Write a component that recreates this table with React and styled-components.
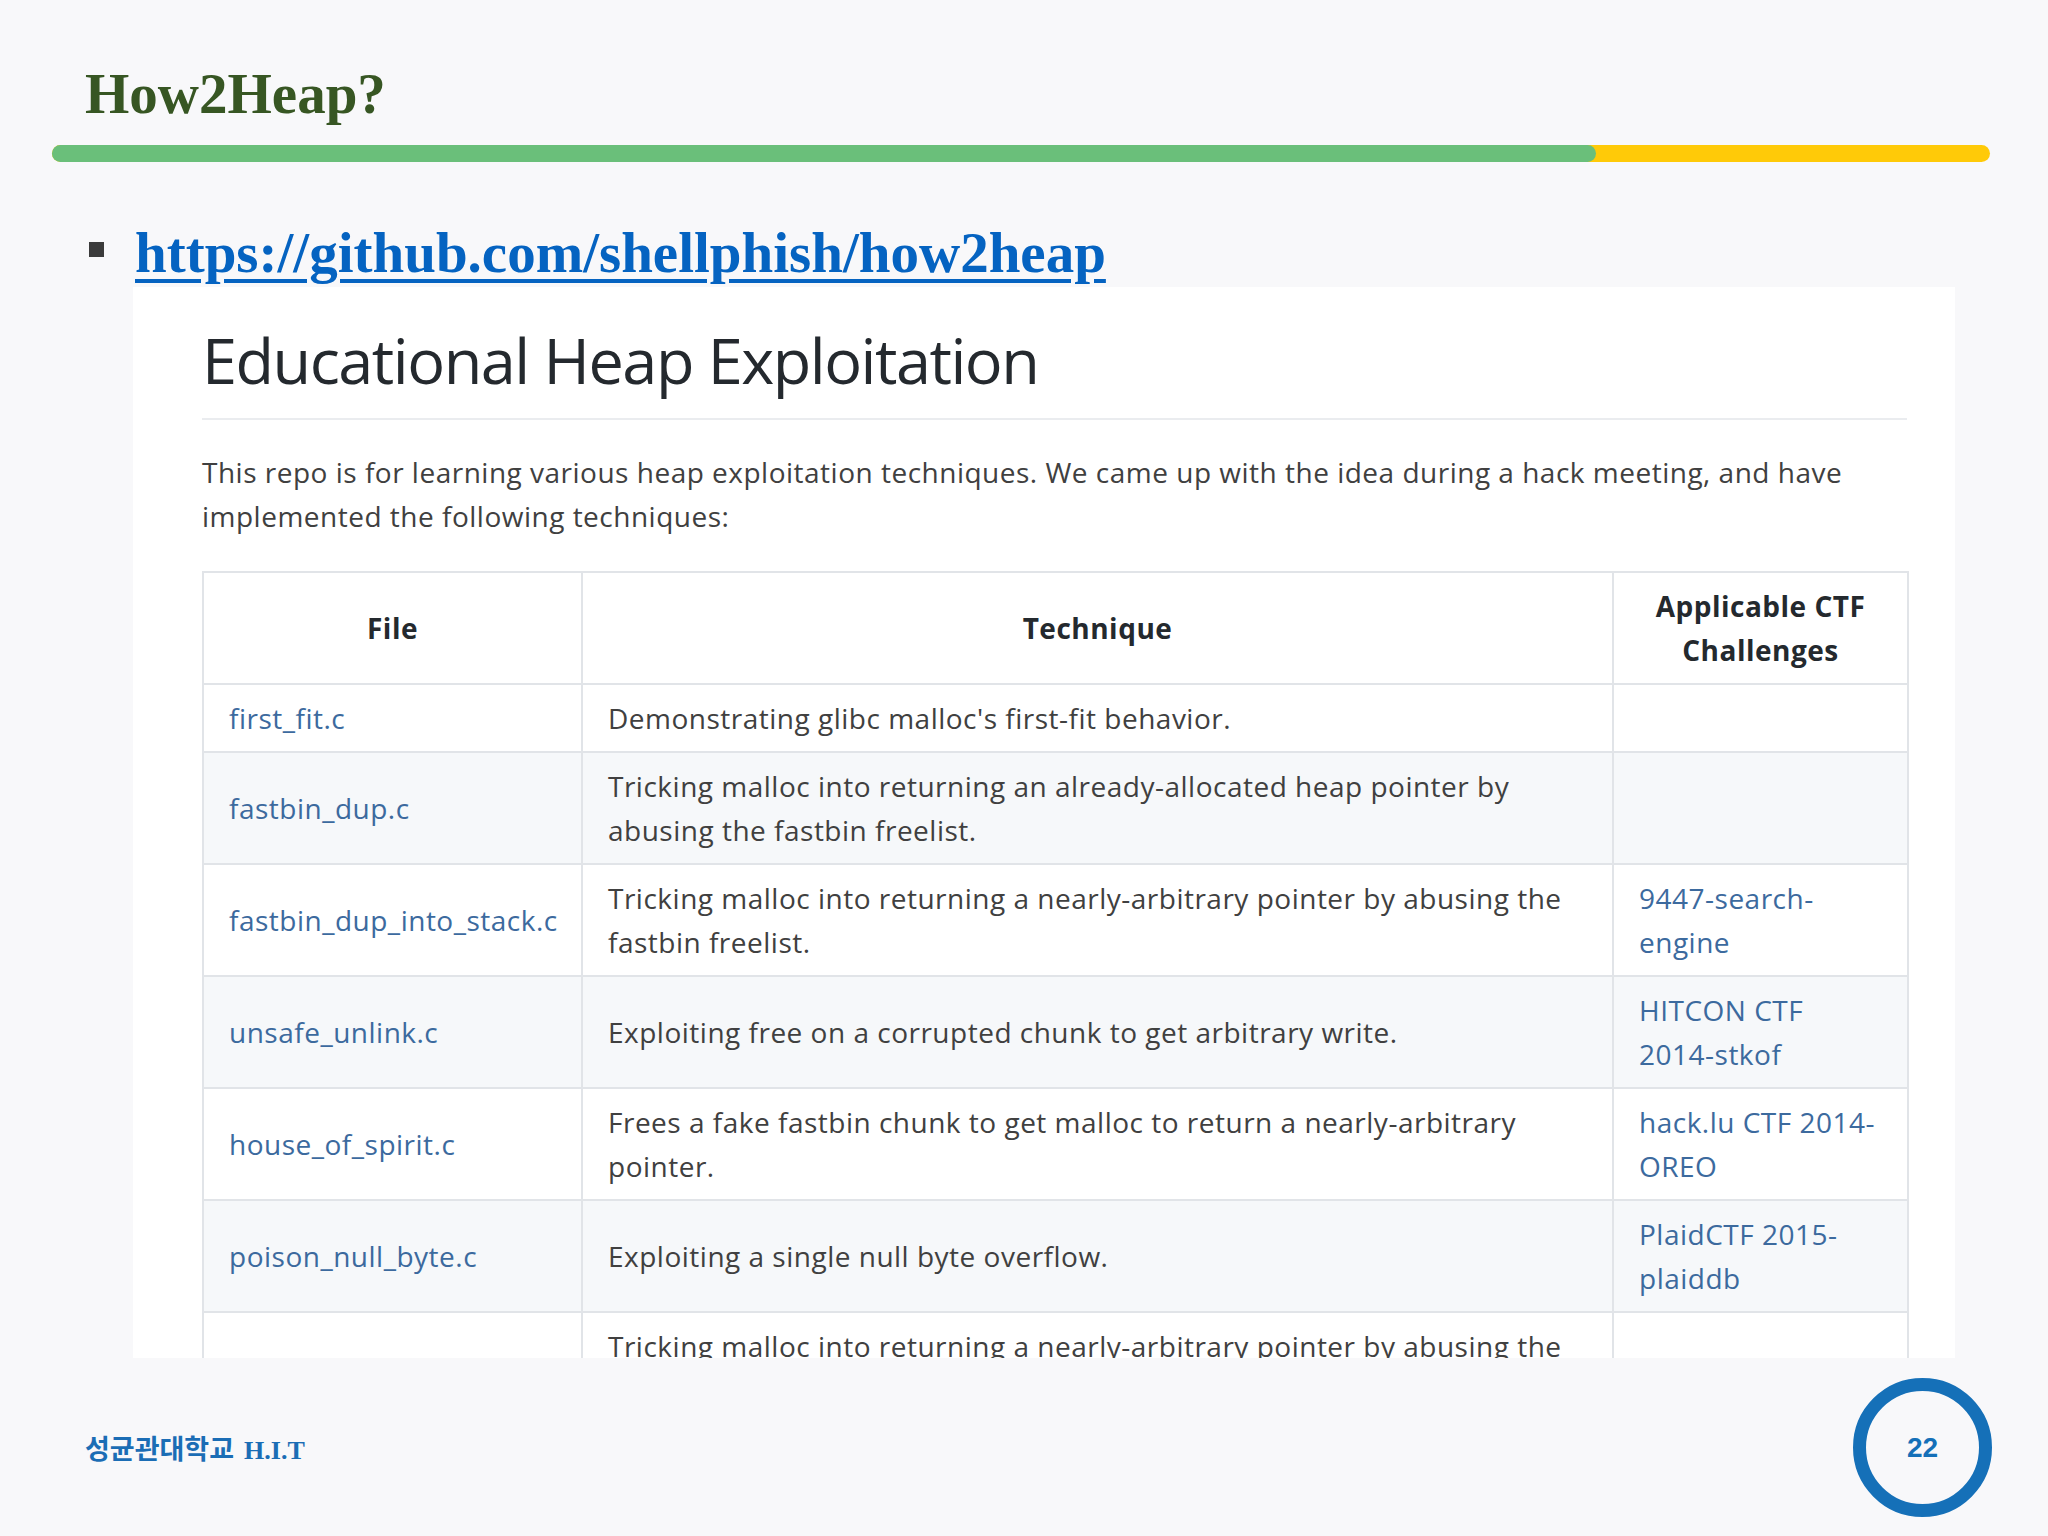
import React from 'react'
import styled, { createGlobalStyle } from 'styled-components'

const GlobalStyle = createGlobalStyle`
  html, body {
    margin: 0;
    padding: 0;
    background: #f8f8fa;
  }
  body {
    font-family: "Liberation Serif", serif;
  }
`

const rows = [
  { file: 'first_fit.c', tech: "Demonstrating glibc malloc's first-fit behavior.", ctf: '' },
  { file: 'fastbin_dup.c', tech: 'Tricking malloc into returning an already-allocated heap pointer by abusing the fastbin freelist.', ctf: '' },
  { file: 'fastbin_dup_into_stack.c', tech: 'Tricking malloc into returning a nearly-arbitrary pointer by abusing the fastbin freelist.', ctf: '9447-search-engine' },
  { file: 'unsafe_unlink.c', tech: 'Exploiting free on a corrupted chunk to get arbitrary write.', ctf: 'HITCON CTF 2014-stkof' },
  { file: 'house_of_spirit.c', tech: 'Frees a fake fastbin chunk to get malloc to return a nearly-arbitrary pointer.', ctf: 'hack.lu CTF 2014-OREO' },
  { file: 'poison_null_byte.c', tech: 'Exploiting a single null byte overflow.', ctf: 'PlaidCTF 2015-plaiddb' },
  { file: 'house_of_lore.c', tech: 'Tricking malloc into returning a nearly-arbitrary pointer by abusing the smallbin freelist.', ctf: '' },
]

const Slide = styled.div`
  width: 2048px;
  height: 1536px;
  box-sizing: border-box;
  display: flex;
  flex-direction: column;
  overflow: hidden;
  background: #f8f8fa;
`

const Title = styled.h1`
  margin: 65px 0 0 85px;
  font: bold 57px/57px "Liberation Serif", serif;
  color: #375623;
`

const Bar = styled.div`
  margin: 23px 0 0 52px;
  width: 1938px;
  height: 17px;
  border-radius: 9px;
  background: #ffca08;
  display: flex;
`

const BarFill = styled.div`
  width: ${p => p.$w}px;
  height: 100%;
  border-radius: 9px;
  background: #6abf7a;
`

const LinkRow = styled.div`
  display: flex;
  align-items: flex-start;
  gap: 31px;
  margin: 62px 0 0 89px;
`

const Bullet = styled.span`
  flex: none;
  width: 15px;
  height: 15px;
  margin-top: 18px;
  background: #3b3b3b;
`

const Link = styled.a`
  font: bold 57px/57px "Liberation Serif", serif;
  color: #0563c1;
  text-decoration: underline;
  text-decoration-thickness: 4px;
  text-underline-offset: 7px;
`

const Shot = styled.div`
  margin: 6px 0 0 133px;
  width: 1822px;
  height: 1071px;
  box-sizing: border-box;
  padding: 32px 48px 0 69px;
  overflow: hidden;
  background: #fff;
  font-family: "Open Sans", sans-serif;
  color: #24292e;
`

const Heading = styled.h2`
  margin: 0;
  padding-bottom: 16px;
  border-bottom: 2px solid #eaecef;
  font-size: 63px;
  line-height: 82.5px;
  font-weight: 400;
  letter-spacing: -1.5px;
`

const Para = styled.p`
  margin: 30px 0 32px;
  font-size: 28px;
  line-height: 44.5px;
  letter-spacing: 0.5px;
  color: #404040;
`

const Table = styled.table`
  width: 1705px;
  table-layout: fixed;
  border-collapse: collapse;
  font-size: 28px;
  line-height: 44px;
  letter-spacing: 0.5px;
`

const Cell = styled.td`
  padding: 11px 25px;
  border: 2px solid #e1e4e8;
  vertical-align: middle;
  color: #404040;
`

const HeadCell = styled.th`
  padding: 11px 25px;
  border: 2px solid #e1e4e8;
  font-weight: 700;
  text-align: center;
  color: #24292e;
`

const Row = styled.tr`
  background: ${p => (p.$striped ? '#f6f8fa' : '#fff')};
`

const FileLink = styled.a`
  color: #3c6a9e;
  text-decoration: none;
`

const Footer = styled.footer`
  margin-top: 20px;
  height: 139px;
  display: flex;
  align-items: center;
  justify-content: space-between;
  padding: 0 56px 0 85px;
`

const School = styled.div`
  display: flex;
  align-items: baseline;
  gap: 10px;
  color: #1b6db5;
`

const Korean = styled.span`
  font: bold 27px "Noto Sans CJK KR", sans-serif;
`

const Club = styled.span`
  font: bold 26px "Liberation Serif", serif;
`

const PageNo = styled.div`
  width: 139px;
  height: 139px;
  box-sizing: border-box;
  border: 13px solid #1570b8;
  border-radius: 50%;
  display: flex;
  align-items: center;
  justify-content: center;
  font: bold 28px "Liberation Sans", Arial, sans-serif;
  color: #1570b8;
`

export default function App() {
  return (
    <>
      <GlobalStyle />
      <Slide>
        <Title>How2Heap?</Title>
        <Bar>
          <BarFill $w={1544} />
        </Bar>
        <LinkRow>
          <Bullet />
          <Link href="#">https://github.com/shellphish/how2heap</Link>
        </LinkRow>
        <Shot>
          <Heading>Educational Heap Exploitation</Heading>
          <Para>
            This repo is for learning various heap exploitation techniques. We came up with the idea during a hack
            meeting, and have implemented the following techniques:
          </Para>
          <Table>
            <colgroup>
              <col style={{ width: 379 }} />
              <col style={{ width: 1031 }} />
              <col style={{ width: 295 }} />
            </colgroup>
            <thead>
              <tr>
                <HeadCell>File</HeadCell>
                <HeadCell>Technique</HeadCell>
                <HeadCell>Applicable CTF Challenges</HeadCell>
              </tr>
            </thead>
            <tbody>
              {rows.map((r, i) => (
                <Row key={r.file} $striped={i % 2 === 1}>
                  <Cell><FileLink href="#">{r.file}</FileLink></Cell>
                  <Cell>{r.tech}</Cell>
                  <Cell>{r.ctf && <FileLink href="#">{r.ctf}</FileLink>}</Cell>
                </Row>
              ))}
            </tbody>
          </Table>
        </Shot>
        <Footer>
          <School>
            <Korean>성균관대학교</Korean>
            <Club>H.I.T</Club>
          </School>
          <PageNo>22</PageNo>
        </Footer>
      </Slide>
    </>
  )
}
